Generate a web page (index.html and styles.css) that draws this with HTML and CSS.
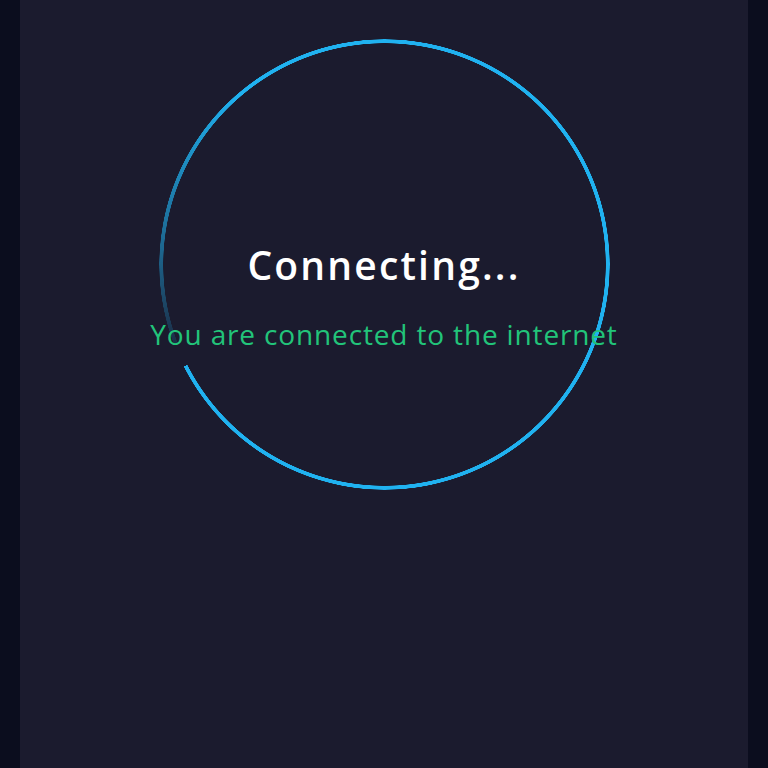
FILE: index.html
```html
<!DOCTYPE html>
<html>
<head>
<meta charset="utf-8">
<link rel="stylesheet" href="styles.css">
</head>
<body>
<div class="panel">
  <div class="ring">
    <div class="title">Connecting...</div>
    <div class="status">You are connected to the internet</div>
  </div>
</div>
</body>
</html>
```
FILE: styles.css
```css
html, body {
  margin: 0;
  padding: 0;
  height: 100%;
}
body {
  background: #0b0d1e;
  font-family: "Open Sans", "Liberation Sans", sans-serif;
  overflow: hidden;
}
.panel {
  margin: 0 20px;
  height: 768px;
  background: #1b1b2e;
  padding-top: 39px;
  box-sizing: border-box;
}
.ring {
  position: relative;
  width: 451px;
  height: 451px;
  margin: 0 auto;
  display: flex;
  flex-direction: column;
  align-items: center;
  padding-top: 203px;
  box-sizing: border-box;
}
.ring::before {
  content: "";
  position: absolute;
  inset: 0;
  border-radius: 50%;
  background: conic-gradient(from 249deg, rgba(32, 178, 240, 0.12) 0deg, rgba(32, 178, 240, 0.5) 25deg, #20b2f0 70deg, #20b2f0 354deg, transparent 354deg);
  -webkit-mask: radial-gradient(circle closest-side, transparent calc(100% - 4.5px), #000 calc(100% - 4px), #000 calc(100% - 0.5px), transparent 100%);
  mask: radial-gradient(circle closest-side, transparent calc(100% - 4.5px), #000 calc(100% - 4px), #000 calc(100% - 0.5px), transparent 100%);
}
.title {
  position: relative;
  color: #ffffff;
  font-size: 39px;
  font-weight: 600;
  letter-spacing: 2.2px;
  line-height: 46px;
  white-space: nowrap;
}
.status {
  position: relative;
  color: #22c47a;
  font-size: 28px;
  letter-spacing: 0.85px;
  line-height: 34px;
  margin-top: 29px;
  white-space: nowrap;
}
```
